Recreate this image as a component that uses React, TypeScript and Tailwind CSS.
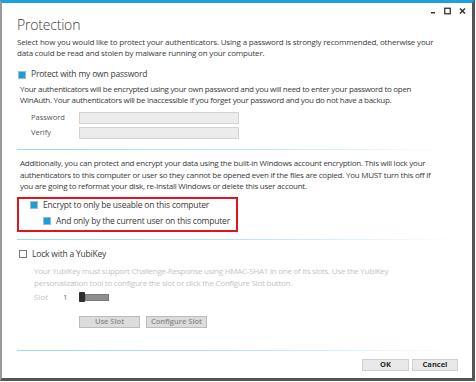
import React from "react";

const Check = ({ on }: { on: boolean }) =>
  on ? (
    <span className="flex h-[8px] w-[8px] shrink-0 items-center justify-center border border-[#9fb8cc] bg-white">
      <span className="h-[6px] w-[6px] bg-[#1c9fd8]" />
    </span>
  ) : (
    <span className="h-[8px] w-[8px] shrink-0 border border-[#7a7a7a] bg-white" />
  );

const Sep = ({ mt }: { mt: string }) => (
  <div className={`${mt} h-px w-[440px] bg-gradient-to-r from-[#9fd9f1] via-[#b8e4f5] to-[#ffffff]`} />
);

export default function App() {
  return (
    <div className="h-[382px] w-[476px] bg-white font-['Open_Sans','Noto_Sans',sans-serif] text-[#3a3a3a]">
      <div className="relative h-[381px] w-[475px] border-b-[3px] border-l-2 border-r-[3px] border-t-[3px] border-b-[#555555] border-l-[#9a9a9a] border-r-[#555555] border-t-[#1ba1e2] bg-white">
        {/* window buttons */}
        <div className="absolute right-[6px] top-[4px] flex items-center gap-[8px]">
          <svg width="6" height="8" viewBox="0 0 6 8">
            <rect x="1" y="5" width="4" height="1.5" fill="#333" />
          </svg>
          <svg width="7" height="8" viewBox="0 0 7 8">
            <rect x="0.75" y="1.25" width="5.5" height="5.5" fill="none" stroke="#333" strokeWidth="1.3" />
          </svg>
          <svg width="7" height="8" viewBox="0 0 7 8">
            <path d="M1 1.5 L6 6.5 M6 1.5 L1 6.5" stroke="#333" strokeWidth="1.5" />
          </svg>
        </div>

        <div className="flex flex-col pl-[15px]">
          <h1 className="mt-[14px] text-[14px] font-light leading-[16px] tracking-[-0.2px] text-[#3c3c3c]">Protection</h1>

          <p className="mt-[3px] whitespace-nowrap text-[8px] leading-[11px] tracking-[-0.18px]">
            Select how you would like to protect your authenticators. Using a password is strongly recommended, otherwise your
            <br />
            data could be read and stolen by malware running on your computer.
          </p>

          <label className="ml-[1px] mt-[11px] flex h-[11px] items-center gap-[5px] text-[8.5px] tracking-[-0.2px]">
            <Check on />
            Protect with my own password
          </label>

          <p className="ml-[3px] mt-[3px] whitespace-nowrap text-[8px] leading-[11px] tracking-[-0.3px]">
            Your authenticators will be encrypted using your own password and you will need to enter your password to open
            <br />
            WinAuth. Your authenticators will be inaccessible if you forget your password and you do not have a backup.
          </p>

          <div className="ml-[14px] mt-[7px] flex flex-col gap-[3px] text-[7.5px] text-[#555]">
            <div className="flex h-[12px] items-center">
              <span className="w-[48px]">Password</span>
              <span className="h-[12px] w-[160px] border border-[#d2d2d2] bg-[#ececec]" />
            </div>
            <div className="flex h-[12px] items-center">
              <span className="w-[48px]">Verify</span>
              <span className="h-[12px] w-[160px] border border-[#d2d2d2] bg-[#ececec]" />
            </div>
          </div>

          <Sep mt="mt-[10px]" />

          <p className="ml-[3px] mt-[7px] whitespace-nowrap text-[8px] leading-[11.5px] tracking-[-0.25px]">
            Additionally, you can protect and encrypt your data using the built-in Windows account encryption. This will lock your
            <br />
            authenticators to this computer or user so they cannot be opened even if the files are copied. You MUST turn this off if
            <br />
            you are going to reformat your disk, re-install Windows or delete this user account.
          </p>

          <div className="mt-[5px] flex w-[221px] flex-col gap-[5px] border-2 border-[#e3141b] pb-[3px] pl-[11px] pt-px text-[8.5px] tracking-[-0.2px]">
            <label className="flex h-[11px] items-center gap-[5px]">
              <Check on />
              Encrypt to only be useable on this computer
            </label>
            <label className="ml-[13px] flex h-[11px] items-center gap-[5px]">
              <Check on />
              And only by the current user on this computer
            </label>
          </div>

          <Sep mt="mt-[7px]" />

          <label className="ml-[2px] mt-[9px] flex h-[11px] items-center gap-[5px] text-[8.5px] tracking-[-0.2px]">
            <Check on={false} />
            Lock with a YubiKey
          </label>

          <p className="ml-[17px] mt-[5px] whitespace-nowrap text-[8px] leading-[12px] tracking-[-0.25px] text-[#c4c4c4]">
            Your YubiKey must support Challenge-Response using HMAC-SHA1 in one of its slots. Use the YubiKey
            <br />
            personalization tool to configure the slot or click the Configure Slot button.
          </p>

          <div className="ml-[17px] mt-[3px] flex h-[11px] items-center text-[8px]">
            <span className="w-[29px] text-[#c4c4c4]">Slot</span>
            <span className="w-[16px] text-[#7d6a7d]">1</span>
            <span className="flex items-center">
              <span className="h-[10px] w-[6px] rounded-[1px] bg-[#2e2e2e]" />
              <span className="h-[7px] w-[24px] border border-[#7a7a7a] bg-[#8e8e8e]" />
            </span>
          </div>

          <div className="ml-[62px] mt-[13px] flex gap-[6px] text-[7.5px] font-semibold text-[#8a8a8a]">
            <span className="flex h-[12px] w-[61px] items-center justify-center border border-[#bcbcbc] bg-[#dcdcdc]">Use Slot</span>
            <span className="flex h-[12px] w-[61px] items-center justify-center border border-[#bcbcbc] bg-[#dcdcdc]">Configure Slot</span>
          </div>

          <Sep mt="mt-[22px]" />

          <div className="ml-[345px] mt-[8px] flex gap-[3px] text-[7.5px] font-bold text-[#2a2a2a]">
            <span className="flex h-[12px] w-[47px] items-center justify-center border border-[#cfcfcf] bg-[#e9e9e9]">OK</span>
            <span className="flex h-[12px] w-[46px] items-center justify-center border border-[#cfcfcf] bg-[#e9e9e9]">Cancel</span>
          </div>
        </div>
      </div>
    </div>
  );
}
